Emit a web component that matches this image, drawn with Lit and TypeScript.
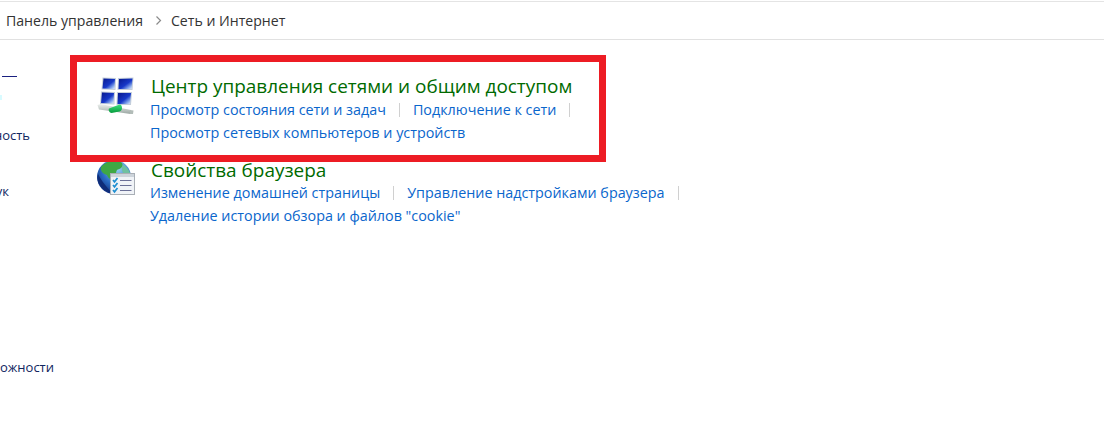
import { LitElement, html, css } from "lit";
import { customElement } from "lit/decorators.js";

const networkIcon = html`<svg class="icon" viewBox="0 0 40 40" width="40" height="40" aria-hidden="true">
  <defs>
    <linearGradient id="pane" x1="0" y1="0" x2="1" y2="1">
      <stop offset="0" stop-color="#08188c"/><stop offset="0.55" stop-color="#1638c8"/><stop offset="0.82" stop-color="#8fb0ee"/><stop offset="1" stop-color="#e8f0fc"/>
    </linearGradient>
    <linearGradient id="pipe" x1="0" y1="0" x2="0" y2="1">
      <stop offset="0" stop-color="#eef1ef"/><stop offset="1" stop-color="#9aa6a2"/>
    </linearGradient>
    <linearGradient id="bar" x1="0" y1="0" x2="0" y2="1">
      <stop offset="0" stop-color="#3fe07e"/><stop offset="1" stop-color="#069a3c"/>
    </linearGradient>
  </defs>
  <path d="M5.500 0.500 19 1 18.500 13 4.500 12.500Z" fill="#c4ceda"/>
  <path d="M6.500 1.500 18 2 17.500 12 5.500 11.500Z" fill="url(#pane)"/>
  <path d="M21 1 36.500 0.500 35.500 13 20.500 13Z" fill="#c4ceda"/>
  <path d="M22 2 35.500 1.500 34.500 12 21.500 12Z" fill="url(#pane)"/>
  <path d="M4 14.500 18 15 17.500 27.500 3 27Z" fill="#c4ceda"/>
  <path d="M5 15.500 17 16 16.500 26.500 4 26Z" fill="url(#pane)"/>
  <path d="M20 15 35 15 34 28 19.500 28Z" fill="#c4ceda"/>
  <path d="M21 16 34 16 33 27 20.500 27Z" fill="url(#pane)"/>
  <path d="M0.500 28 3.500 27 34 33 33.500 37 2 32.500Z" fill="url(#pipe)"/>
  <path d="M33 33 36.500 33.500 36 37 33 37Z" fill="#b2bcb8"/>
  <path d="M12 31.500 L22.500 27.500 C24 27.200 25 29 25 31 C25 33 24 34 22.500 34.500 L14.500 36 C12.500 36 11 33 12 31.500Z" fill="url(#bar)"/>
</svg>`;

const globeIcon = html`<svg class="icon up" viewBox="0 0 40 40" width="40" height="40" aria-hidden="true">
  <defs>
    <radialGradient id="sea" cx="0.6" cy="0.25" r="0.85">
      <stop offset="0" stop-color="#9ad4f2"/><stop offset="0.55" stop-color="#2a6cc4"/><stop offset="1" stop-color="#0c2270"/>
    </radialGradient>
  </defs>
  <circle cx="17" cy="17" r="17" fill="url(#sea)"/>
  <path d="M4 7 C9 0 21 -1 25 3 C27 7 23 9 20 10 C18 13 20 16 17 19 C13 20 11 18 10 15 C7 14 3 12 4 7Z" fill="#3fa844"/>
  <path d="M26 5 C30 7 33 11 34 16 L27 14 C25 12 24 8 26 5Z" fill="#6fc0a0"/>
  <path d="M1 14 C5 22 10 27 15 33 C8 32 1 26 0.300 18Z" fill="#0f2c78"/>
  <rect x="13" y="13" width="25" height="22" fill="#a9afb6"/>
  <rect x="14" y="14" width="23" height="20" fill="#f0f3f7"/>
  <rect x="14" y="14" width="23" height="3" fill="#cdd4db"/>
  <g fill="none" stroke="#1f8fd0" stroke-width="1.700">
    <path d="M16 20 17.500 21.800 20.500 18"/>
    <path d="M16 25 17.500 26.800 20.500 23"/>
    <path d="M16 30 17.500 31.800 20.500 28"/>
  </g>
  <g stroke="#6a6f96" stroke-width="1.200">
    <path d="M23 20.500H34.500M23 25.500H34.500M23 30.500H34.500"/>
  </g>
</svg>`;

const sidebarItems = [
  { text: "Система и безопасность", cls: "s1" },
  { text: "Оборудование и звук", cls: "s2" },
  { text: "Специальные возможности", cls: "s3" },
];

@customElement("app-root")
export class AppRoot extends LitElement {
  static styles = css`
    :host {
      display: block;
      position: relative;
      width: 1104px;
      height: 431px;
      overflow: hidden;
      background: #fff;
      font-family: "Open Sans", "Noto Sans", sans-serif;
    }
    .crumbs {
      box-sizing: border-box;
      height: 39px;
      margin-top: 1px;
      border-top: 1px solid #e4e4e4;
      border-bottom: 1px solid #e1e1e1;
      display: flex;
      align-items: center;
      padding-left: 6px;
      font-size: 14.1px;
      color: #333;
    }
    .chev { width: 7px; height: 9px; margin: 0 9px 0 12px; }
    .body { display: flex; }
    .side {
      width: 97px;
      flex: none;
      font-size: 13px;
      color: #10265f;
      display: flex;
      flex-direction: column;
    }
    .side .row {
      display: flex;
      justify-content: flex-end;
      white-space: nowrap;
      overflow: hidden;
      line-height: 18px;
    }
    .rule { width: 15px; height: 1px; background: #1a2080; margin: 36px 0 0 2px; }
    .tint { width: 2px; height: 5px; background: #d8fbff; margin-top: 18px; }
    .s1 { width: 30px; margin-top: 26px; }
    .s2 { width: 9px; margin-top: 38px; }
    .s3 { width: 54px; margin-top: 158px; }
    .main { display: flex; flex-direction: column; gap: 13px; padding-top: 33px; }
    .group { display: flex; gap: 13px; }
    .icon { flex: none; margin-top: 4px; }
    .icon.up { margin-top: 3px; }
    .title {
      font-size: 18.95px;
      line-height: 25px;
      color: #006a00;
      padding-left: 1px;
      margin: 1px 0 -1px;
    }
    .links {
      display: flex;
      flex-wrap: wrap;
      width: 560px;
      font-size: 14.35px;
      line-height: 23px;
      color: #0a66cc;
    }
    .tight { margin-top: -2px; }
    .link { display: inline-flex; align-items: center; white-space: nowrap; }
    .link.sep::after {
      content: "";
      width: 1px;
      height: 14px;
      background: #d0d0d0;
      margin: 0 13px;
    }
    .break { flex-basis: 100%; height: 0; }
    .frame {
      position: absolute;
      left: 70px;
      top: 55px;
      width: 536px;
      height: 107px;
      box-sizing: border-box;
      border: 7px solid #ed1c24;
    }
  `;

  render() {
    return html`
      <nav class="crumbs">
        <span>Панель управления</span>
        <svg class="chev" viewBox="0 0 7 9"><path d="M1.500 .5 5.500 4.500 1.500 8.500" fill="none" stroke="#8a8a8a" stroke-width="1.200"/></svg>
        <span>Сеть и Интернет</span>
      </nav>
      <div class="body">
        <aside class="side">
          <div class="rule"></div>
          <div class="tint"></div>
          ${sidebarItems.map((i) => html`<div class="row ${i.cls}"><span>${i.text}</span></div>`)}
        </aside>
        <main class="main">
          <section class="group">
            ${networkIcon}
            <div>
              <div class="title">Центр управления сетями и общим доступом</div>
              <div class="links">
                <span class="link sep">Просмотр состояния сети и задач</span>
                <span class="link sep">Подключение к сети</span>
                <span class="break"></span>
                <span class="link">Просмотр сетевых компьютеров и устройств</span>
              </div>
            </div>
          </section>
          <section class="group">
            ${globeIcon}
            <div>
              <div class="title">Свойства браузера</div>
              <div class="links tight">
                <span class="link sep">Изменение домашней страницы</span>
                <span class="link sep">Управление надстройками браузера</span>
                <span class="break"></span>
                <span class="link">Удаление истории обзора и файлов "cookie"</span>
              </div>
            </div>
          </section>
        </main>
      </div>
      <div class="frame"></div>
    `;
  }
}
